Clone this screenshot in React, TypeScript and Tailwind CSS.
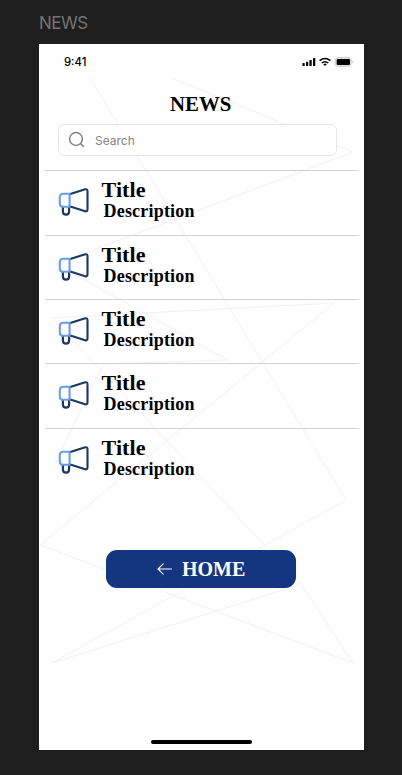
const items = [1, 2, 3, 4, 5];

function Backdrop() {
  return (
    <svg
      className="pointer-events-none absolute left-0 top-0 h-[705px] w-[325px]"
      viewBox="39 44 325 705"
      fill="none"
      stroke="#ededf8"
      strokeWidth="0.9"
    >
      <path d="M90 78L346 500L52 663L298 585L299 581L353 663L40 545L334 303L52 318L267 548" />
      <path d="M172 78L353 152L56 264L228 360L103 364L55 464" />
    </svg>
  );
}

function Megaphone() {
  return (
    <svg className="ml-[13px] mt-[16px] h-[30px] w-[31px] shrink-0" viewBox="0 0 31 30" fill="none" strokeLinejoin="round" strokeLinecap="round">
      <g transform="translate(0.6 0.2)">
        <path d="M11.7 6.8L26.6 2.1Q28.9 1.6 28.9 4V22Q28.9 24.6 26.6 24.1L11.7 19.4" stroke="#1b3762" strokeWidth="2.1" />
        <path d="M4.3 20V24.3C4.3 28.5 10.5 28.5 10.5 24.3V20" stroke="#1b3762" strokeWidth="2.2" />
        <path d="M11 6.6H4.6Q1.2 6.6 1.2 10V16.2Q1.2 19.6 4.6 19.6H11Z" stroke="#669eed" strokeWidth="2.1" />
      </g>
    </svg>
  );
}

function StatusIcons() {
  return (
    <svg className="h-[10px] w-[52px]" viewBox="0 0 52 10">
      <g fill="#000">
        <rect x="0.5" y="6.1" width="2.2" height="2.9" rx="0.6" />
        <rect x="4" y="4.8" width="2.2" height="4.2" rx="0.6" />
        <rect x="7.4" y="3" width="2.3" height="6" rx="0.6" />
        <rect x="11" y="1" width="2.3" height="8" rx="0.6" />
      </g>
      <g fill="none" stroke="#000" strokeWidth="1.5">
        <path d="M17.6 3.6Q23 -0.7 28.4 3.6" />
        <path d="M19.7 6Q23 3.3 26.3 6" />
      </g>
      <path d="M21.2 7.2Q23 5.8 24.8 7.2L23 9Z" fill="#000" />
      <rect x="33.3" y="0.5" width="16" height="8.8" rx="2.5" fill="#e4e4e4" stroke="#ccc" strokeWidth="0.9" />
      <rect x="34.7" y="1.9" width="13.3" height="6" rx="1.2" fill="#000" />
      <path d="M50.3 3.6Q52.3 4.9 50.3 6.2Z" fill="#bbb" />
    </svg>
  );
}

export default function App() {
  return (
    <div className="h-[775px] w-[402px] overflow-hidden bg-[#1e1e1e] pl-[39px]">
      <div className="h-[44px] pt-[13px] font-['Inter',sans-serif] text-[17px] leading-[21px] tracking-[-0.5px] text-[#747474]">
        NEWS
      </div>
      <main className="relative h-[705.5px] w-[325.3px] bg-white font-['Liberation_Serif',serif] font-bold text-black">
        <Backdrop />
        <div className="relative flex h-full flex-col">
          <header className="flex h-[35px] items-center justify-between pl-[25px] pr-[10px]">
            <span className="pt-px font-['Inter',sans-serif] text-[11.3px] font-medium">9:41</span>
            <StatusIcons />
          </header>
          <h1 className="mt-[11.5px] pr-[2px] text-center text-[20.8px] leading-[25px]">NEWS</h1>
          <label className="ml-[19px] mt-[8.5px] flex h-[32px] w-[278.5px] items-center rounded-[6px] border border-[#e6e6e8] bg-white pl-[9px]">
            <svg className="h-[18px] w-[18px]" viewBox="0 0 18 18" fill="none" stroke="#858585" strokeWidth="1.5">
              <circle cx="8" cy="8" r="6.4" />
              <path d="M12.6 12.6L16 16" />
            </svg>
            <span className="ml-[9px] pt-[1px] font-['Inter',sans-serif] text-[12px] font-normal text-[#858585]">Search</span>
          </label>
          <ul className="mt-[14.4px] pl-[6px] pr-[5px]">
            {items.map((item) => (
              <li key={item} className="flex h-[64.3px] border-t border-[#d2d2d4]">
                <Megaphone />
                <div className="ml-[12.5px] pt-[7px]">
                  <div className="text-[22px] leading-[24px] tracking-[0.1px]">Title</div>
                  <div className="ml-[2px] text-[18px] leading-[18px] tracking-[0.2px]">Description</div>
                </div>
              </li>
            ))}
          </ul>
          <button className="ml-[67px] mt-[58px] flex h-[38px] w-[189.5px] items-center rounded-[11px] bg-[#143580] pl-[51px] text-white">
            <svg className="h-[12px] w-[16px]" viewBox="0 0 16 12" fill="none" stroke="currentColor" strokeWidth="1.1" strokeLinecap="round" strokeLinejoin="round">
              <path d="M14.5 6H1M6.2 0.8L1 6L6.2 11.2" />
            </svg>
            <span className="ml-[9px] text-[20px] leading-[24px]">HOME</span>
          </button>
          <div className="mb-[6px] ml-[112px] mt-auto h-[4px] w-[101px] rounded-full bg-black" />
        </div>
      </main>
    </div>
  );
}
